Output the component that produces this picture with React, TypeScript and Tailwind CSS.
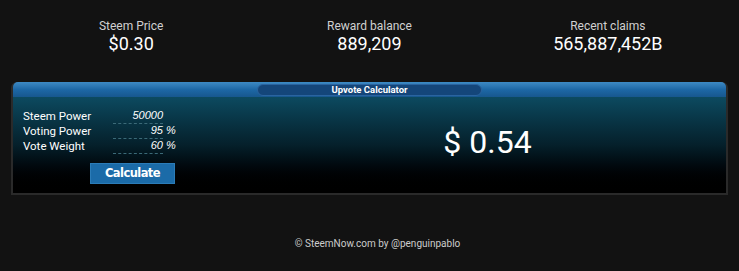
import React from 'react';

const stats = [
  { label: 'Steem Price', value: '$0.30' },
  { label: 'Reward balance', value: '889,209' },
  { label: 'Recent claims', value: '565,887,452B' },
];

const rows = [
  { label: 'Steem Power', value: '50000', unit: '' },
  { label: 'Voting Power', value: '95', unit: '%' },
  { label: 'Vote Weight', value: '60', unit: '%' },
];

export default function App() {
  return (
    <div className="w-[739px] h-[271px] bg-[#121212] font-['Roboto',sans-serif] overflow-hidden">
      {/* Stats */}
      <div className="grid grid-cols-3 pt-[20px] pl-[12px] pr-[12px]">
        {stats.map(s => (
          <div key={s.label} className="flex flex-col items-center">
            <span className="text-[12px] leading-[13px] text-[#d0d0d0]">{s.label}</span>
            <span className="text-[18px] leading-[22px] text-white">{s.value}</span>
          </div>
        ))}
      </div>

      {/* Upvote Calculator panel */}
      <div className="mx-[11px] mt-[27px] rounded-t-[6px] bg-[#2a2a2a] p-[0_2px_2px_2px]">
        <div className="h-[15px] rounded-t-[5px] bg-gradient-to-b from-[#3d8ac4] via-[#1d68a6] to-[#17578e] flex items-center justify-center">
          <div className="w-[225px] h-[12px] rounded-[6px] bg-[#14467a] border border-[#2a64a0] flex items-center justify-center">
            <span className="text-[9.5px] font-bold text-white leading-none">Upvote Calculator</span>
          </div>
        </div>
        <div className="h-[96px] bg-gradient-to-b from-[#0c4a60] via-[#05202b] to-black flex">
          <div className="w-[200px] pl-[10px] pt-[12px]">
            {rows.map(r => (
              <div key={r.label} className="flex items-center h-[15px]">
                <span className="w-[90px] text-[11.5px] text-white leading-none">{r.label}</span>
                <span className="w-[50px] text-right text-[11px] italic text-white leading-none border-b border-dashed border-[#3b6a78] pb-[2px] font-['Liberation_Sans',Arial,sans-serif]">
                  {r.value}
                </span>
                {r.unit && <span className="ml-[3px] text-[11px] italic text-white leading-none pb-[2px] font-['Liberation_Sans',Arial,sans-serif]">{r.unit}</span>}
              </div>
            ))}
            <div className="pl-[67px] pt-[6px]">
              <button className="w-[85px] h-[21px] bg-[#1b6ba8] border border-[#2b7cb8] text-white text-[11.5px] font-bold font-['DejaVu_Sans',sans-serif] tracking-tighter">
                Calculate
              </button>
            </div>
          </div>
          <div className="flex-1 flex items-center justify-center pl-[36px] pb-[6px]">
            <span className="text-[32px] text-white">$ 0.54</span>
          </div>
        </div>
      </div>

      {/* Footer */}
      <div className="flex justify-center pt-[41px] pl-[16px]">
        <span className="text-[10px] text-[#cccccc]">© SteemNow.com by @penguinpablo</span>
      </div>
    </div>
  );
}
